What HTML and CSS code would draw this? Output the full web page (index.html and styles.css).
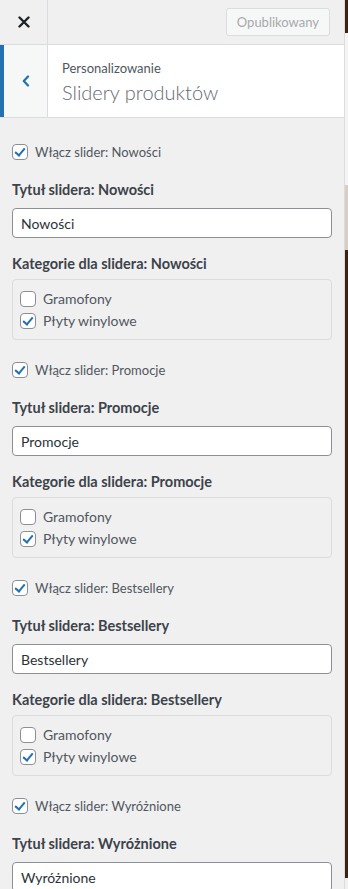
FILE: index.html
```html
<!DOCTYPE html>
<html lang="pl">
<head>
    <meta charset="UTF-8">
    <meta name="viewport" content="width=device-width, initial-scale=1.0">
    <title>Slidery produktów - Personalizowanie</title>
    <link rel="stylesheet" href="styles.css">
</head>
<body>
    <div class="frame">
        <div class="sidebar">
            <header class="topbar">
                <button class="close-button" aria-label="Zamknij">
                    <svg width="12" height="12" viewBox="0 0 12 12"><path d="M1.5 1.5 L10.5 10.5 M10.5 1.5 L1.5 10.5" stroke="#1d2327" stroke-width="2.4" stroke-linecap="round"/></svg>
                </button>
                <div class="topbar-actions">
                    <button class="publish-button" disabled>Opublikowany</button>
                </div>
            </header>

            <div class="section-head">
                <button class="back-button" aria-label="Wróć">
                    <svg width="8" height="12" viewBox="0 0 8 12"><path d="M6 1.5 L1.8 6 L6 10.5" fill="none" stroke="#2271b1" stroke-width="2.2" stroke-linecap="round" stroke-linejoin="round"/></svg>
                </button>
                <div class="section-titles">
                    <span class="crumb">Personalizowanie</span>
                    <h2 class="section-title">Slidery produktów</h2>
                </div>
            </div>

            <div class="controls">
                <div class="slider-group">
                    <label class="toggle"><span class="box checked"></span>Włącz slider: Nowości</label>
                    <div class="control-title">Tytuł slidera: Nowości</div>
                    <input class="text-input" type="text" value="Nowości">
                    <div class="control-title cat-title">Kategorie dla slidera: Nowości</div>
                    <div class="cat-list">
                        <label class="cat-item"><span class="box"></span>Gramofony</label>
                        <label class="cat-item"><span class="box checked"></span>Płyty winylowe</label>
                    </div>
                </div>

                <div class="slider-group">
                    <label class="toggle"><span class="box checked"></span>Włącz slider: Promocje</label>
                    <div class="control-title">Tytuł slidera: Promocje</div>
                    <input class="text-input" type="text" value="Promocje">
                    <div class="control-title cat-title">Kategorie dla slidera: Promocje</div>
                    <div class="cat-list">
                        <label class="cat-item"><span class="box"></span>Gramofony</label>
                        <label class="cat-item"><span class="box checked"></span>Płyty winylowe</label>
                    </div>
                </div>

                <div class="slider-group">
                    <label class="toggle"><span class="box checked"></span>Włącz slider: Bestsellery</label>
                    <div class="control-title">Tytuł slidera: Bestsellery</div>
                    <input class="text-input" type="text" value="Bestsellery">
                    <div class="control-title cat-title">Kategorie dla slidera: Bestsellery</div>
                    <div class="cat-list">
                        <label class="cat-item"><span class="box"></span>Gramofony</label>
                        <label class="cat-item"><span class="box checked"></span>Płyty winylowe</label>
                    </div>
                </div>

                <div class="slider-group">
                    <label class="toggle"><span class="box checked"></span>Włącz slider: Wyróżnione</label>
                    <div class="control-title">Tytuł slidera: Wyróżnione</div>
                    <input class="text-input" type="text" value="Wyróżnione">
                </div>
            </div>
        </div>
        <div class="preview"></div>
    </div>
</body>
</html>
```

FILE: styles.css
```css
body {
    margin: 0;
    height: 889px;
    overflow: hidden;
    font-family: Lato, 'Liberation Sans', sans-serif;
    background: #f0f0f1;
    color: #50575e;
}
.frame {
    display: flex;
    height: 889px;
}
.sidebar {
    width: 344px;
    border-right: 1px solid #dcdcde;
    background: #f0f0f1;
    display: flex;
    flex-direction: column;
}
.preview {
    width: 3px;
    background: linear-gradient(to bottom, #3b2414 0, #3b2414 33px, #f4f4f4 33px, #f4f4f4 185px, #d8cec4 185px, #d8cec4 250px, #3b2414 250px, #3b2414 878px, #f0f0f1 878px);
}

/* top bar */
.topbar {
    flex: none;
    display: flex;
    height: 44px;
    border-bottom: 1px solid #dcdcde;
}
.close-button {
    width: 48px;
    border: none;
    border-right: 1px solid #dcdcde;
    background: transparent;
    display: flex;
    align-items: center;
    justify-content: center;
    padding: 0;
}
.topbar-actions {
    flex: 1;
    display: flex;
    justify-content: flex-end;
    align-items: center;
    padding-right: 14px;
}
.publish-button {
    height: 28px;
    padding: 0 10px;
    border: 1px solid #dcdcde;
    border-radius: 3px;
    background: #f6f7f7;
    color: #a7aaad;
    font-family: inherit;
    font-size: 13px;
}

/* section header */
.section-head {
    flex: none;
    display: flex;
    height: 72px;
    background: #fff;
    border-bottom: 1px solid #dcdcde;
}
.back-button {
    width: 48px;
    border: none;
    border-left: 4px solid #2271b1;
    border-right: 1px solid #dcdcde;
    background: #f6f7f7;
    display: flex;
    align-items: center;
    justify-content: center;
    padding: 0;
}
.section-titles {
    padding: 15px 0 0 14px;
    display: flex;
    flex-direction: column;
}
.crumb {
    font-size: 13px;
    line-height: 16px;
    color: #50575e;
}
.section-title {
    margin: 3px 0 0;
    font-size: 20px;
    line-height: 26px;
    font-weight: 300;
    color: #646970;
}

/* controls */
.controls {
    flex: none;
    padding: 26px 12px 0;
    display: flex;
    flex-direction: column;
    gap: 22px;
}
.slider-group {
    display: flex;
    flex-direction: column;
}
.toggle,
.cat-item {
    display: flex;
    align-items: center;
    gap: 7px;
    font-size: 13px;
    line-height: 16px;
}
.cat-item {
    font-size: 14px;
}
.box {
    width: 14px;
    height: 14px;
    border: 1px solid #8c8f94;
    border-radius: 4px;
    background: #fff;
    flex: none;
    position: relative;
}
.box.checked::after {
    content: "";
    position: absolute;
    left: 4px;
    top: 1px;
    width: 4px;
    height: 8px;
    border: solid #2271b1;
    border-width: 0 2.5px 2.5px 0;
    transform: rotate(40deg);
}
.control-title {
    margin-top: 20px;
    font-size: 14.5px;
    line-height: 20px;
    font-weight: 700;
    color: #3c434a;
}
.text-input {
    margin-top: 8px;
    height: 30px;
    box-sizing: border-box;
    border: 1px solid #8c8f94;
    border-radius: 4px;
    background: #fff;
    padding: 0 8px;
    font-family: inherit;
    font-size: 14px;
    color: #2c3338;
}
.cat-title {
    margin-top: 16px;
}
.cat-list {
    margin-top: 5px;
    height: 61px;
    box-sizing: border-box;
    border: 1px solid #dcdcde;
    border-radius: 4px;
    padding: 11px 7px 0;
    display: flex;
    flex-direction: column;
    gap: 6px;
}
```
